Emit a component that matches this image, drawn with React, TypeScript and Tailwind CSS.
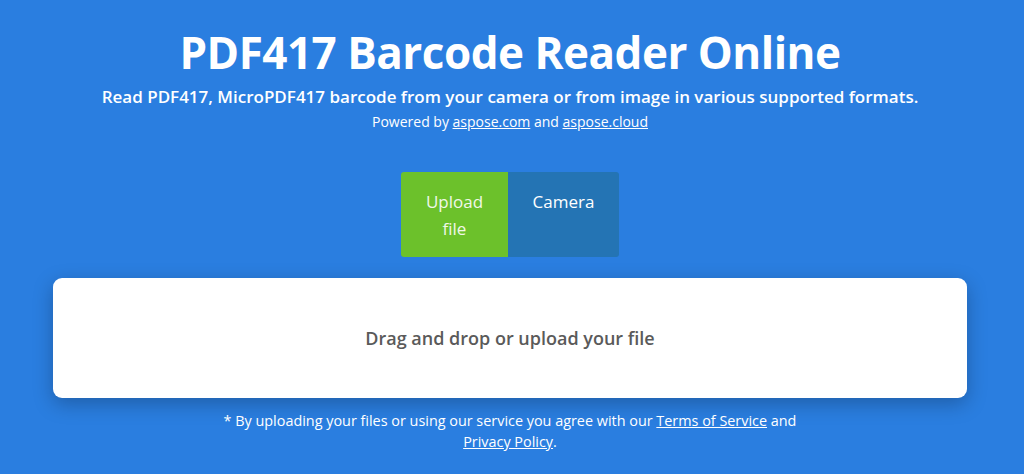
import React from "react";

export default function App() {
  return (
    <div
      className="w-[1024px] h-[474px] bg-[#2a7ee0] text-white overflow-hidden flex flex-col items-center pr-[4px]"
      style={{ fontFamily: '"Open Sans", "Noto Sans", sans-serif' }}
    >
      <h1 className="mt-[25px] text-[44px] leading-[54px] font-bold tracking-[-0.5px]">
        PDF417 Barcode Reader Online
      </h1>
      <p className="mt-[7px] text-[17px] leading-[22px] font-semibold">
        Read PDF417, MicroPDF417 barcode from your camera or from image in various supported formats.
      </p>
      <p className="mt-[4px] text-[14px] leading-[20px]">
        Powered by <a className="underline">aspose.com</a> and <a className="underline">aspose.cloud</a>
      </p>
      <div className="mt-[40px] flex rounded-[3px] overflow-hidden">
        <div className="w-[107px] h-[85px] bg-[#6cc12b] text-[#f0f8e8] text-[17px] leading-[27px] pt-[16px] text-center">
          Upload
          <br />
          file
        </div>
        <div className="w-[111px] h-[85px] bg-[#2474b4] text-[17px] leading-[27px] pt-[16px] text-center">
          Camera
        </div>
      </div>
      <div className="mt-[21px] w-[914px] h-[120px] bg-white rounded-[9px] shadow-[0_6px_20px_rgba(0,0,0,0.25)] flex items-center justify-center">
        <span className="text-[#5a5a5a] text-[18px] font-semibold">Drag and drop or upload your file</span>
      </div>
      <p className="mt-[12px] text-[14.4px] leading-[21px] text-center w-[620px]">
        * By uploading your files or using our service you agree with our{" "}
        <a className="underline">Terms of Service</a> and <a className="underline">Privacy Policy</a>.
      </p>
    </div>
  );
}
